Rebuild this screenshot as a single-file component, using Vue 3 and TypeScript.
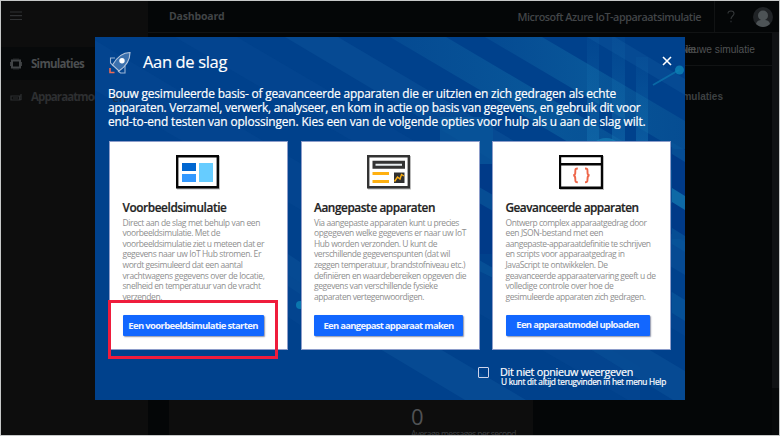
<script setup lang="ts">
import type { Directive } from 'vue'

interface Line { text: string; width: number }
interface Card { kind: 'sample' | 'custom' | 'advanced'; title: Line; lines: Line[]; action: Line }

// Tracks the text out or in so that it fills the given width.
const vFit: Directive<HTMLElement, number> = {
  mounted(el, { value }) {
    const count = el.textContent?.length ?? 1
    const natural = el.getBoundingClientRect().width
    el.style.letterSpacing = `${(value - natural) / count}px`
  },
}

const intro: Line[] = [
  { text: 'Bouw gesimuleerde basis- of geavanceerde apparaten die er uitzien en zich gedragen als echte', width: 508 },
  { text: 'apparaten. Verzamel, verwerk, analyseer, en kom in actie op basis van gegevens, en gebruik dit voor', width: 532.5 },
  { text: 'end-to-end testen van oplossingen. Kies een van de volgende opties voor hulp als u aan de slag wilt.', width: 537.5 },
]

const cards: Card[] = [
  {
    kind: 'sample',
    title: { text: 'Voorbeeldsimulatie', width: 104 },
    lines: [
      { text: 'Direct aan de slag met behulp van een', width: 137.5 },
      { text: 'voorbeeldsimulatie. Met de', width: 97.5 },
      { text: 'voorbeeldsimulatie ziet u meteen dat er', width: 141.5 },
      { text: 'gegevens naar uw IoT Hub stromen. Er', width: 138.5 },
      { text: 'wordt gesimuleerd dat een aantal', width: 120 },
      { text: 'vrachtwagens gegevens over de locatie,', width: 142 },
      { text: 'snelheid en temperatuur van de vracht', width: 138 },
      { text: 'verzenden.', width: 39.5 },
    ],
    action: { text: 'Een voorbeeldsimulatie starten', width: 129.5 },
  },
  {
    kind: 'custom',
    title: { text: 'Aangepaste apparaten', width: 121 },
    lines: [
      { text: 'Via aangepaste apparaten kunt u precies', width: 145 },
      { text: 'opgegeven welke gegevens er naar uw IoT', width: 152 },
      { text: 'Hub worden verzonden. U kunt de', width: 123 },
      { text: 'verschillende gegevenspunten (dat wil', width: 136 },
      { text: 'zeggen temperatuur, brandstofniveau etc.)', width: 151 },
      { text: 'definiëren en waardebereiken opgeven die', width: 152 },
      { text: 'gegevens van verschillende fysieke', width: 123.5 },
      { text: 'apparaten vertegenwoordigen.', width: 110 },
    ],
    action: { text: 'Een aangepast apparaat maken', width: 130 },
  },
  {
    kind: 'advanced',
    title: { text: 'Geavanceerde apparaten', width: 133 },
    lines: [
      { text: 'Ontwerp complex apparaatgedrag door', width: 141 },
      { text: 'een JSON-bestand met een', width: 97.5 },
      { text: 'aangepaste-apparaatdefinitie te schrijven', width: 145 },
      { text: 'en scripts voor apparaatgedrag in', width: 119 },
      { text: 'JavaScript te ontwikkelen. De', width: 102 },
      { text: 'geavanceerde apparaatervaring geeft u de', width: 150 },
      { text: 'volledige controle over hoe de', width: 108 },
      { text: 'gesimuleerde apparaten zich gedragen.', width: 140 },
    ],
    action: { text: 'Een apparaatmodel uploaden', width: 122.5 },
  },
]
</script>

<template>
  <div class="app">
    <nav class="sidebar">
      <svg class="menu" viewBox="0 0 12 10"><path d="M0 1h12M0 4.7h12M0 8.5h12" /></svg>
      <div class="nav-item active">
        <svg class="nav-icon" viewBox="0 0 12 12"><path d="M2 2.500h8v7H2z" /><path class="pins" d="M4 .5v1M6 .5v1M8 .5v1M4 10.500v1M6 10.500v1M8 10.500v1M.4 4v4M11.600 4v4" /></svg>
        <span v-fit="53">Simulaties</span>
      </div>
      <div class="nav-item">
        <svg class="nav-icon" viewBox="0 0 12 12"><path class="thin" d="M1 5h8.500v4H1zM3 7h5M9.500 5h1.500V3M11 5v3.500L9.500 9" /></svg>
        <span v-fit="93">Apparaatmodellen</span>
      </div>
    </nav>
    <div class="main">
      <header class="topbar">
        <span v-fit="55.5" class="crumb">Dashboard</span>
        <span v-fit="183.5" class="product">Microsoft Azure IoT-apparaatsimulatie</span>
        <div class="account">
          <svg class="help" viewBox="0 0 8 13"><path d="M1 3.500C1 .2 7 .2 7 3.500 7 6 4 6 4 9M4 10.800v1.500" /></svg>
          <svg class="avatar" viewBox="0 0 20 20">
            <circle class="ring" cx="10" cy="10" r="10" />
            <circle class="person" cx="10" cy="8.500" r="5" />
            <path class="person" d="M3 17c1-4 4-4 7-4s6 0 7 4c-4 4-10 4-14 0z" />
          </svg>
        </div>
      </header>
      <div class="content">
        <div class="page">
          <div class="toolbar"><span class="new-sim">Nieuwe simulatie</span></div>
          <div class="filter"><span>simulaties</span></div>
          <section class="metric">
            <strong>0</strong>
            <small v-fit="105">Average messages per second</small>
          </section>
        </div>
        <div class="scroll"><div class="thumb"></div></div>
      </div>
    </div>
    <span class="new-sim echo">Nie</span>

    <div class="dialog" role="dialog">
      <svg class="backdrop" viewBox="0 0 590 363">
        <defs>
          <linearGradient id="beam" x1="0" y1="0" x2="0" y2="1">
            <stop offset="0" stop-color="#1471b0" stop-opacity="0.1" />
            <stop offset="1" stop-color="#1471b0" stop-opacity="0.5" />
          </linearGradient>
          <linearGradient id="teal" x1="0" y1="0" x2="1" y2="0">
            <stop offset="0" stop-color="#0a5599" stop-opacity="0.45" />
            <stop offset="0.5" stop-color="#085699" />
            <stop offset="1" stop-color="#075094" stop-opacity="0.8" />
          </linearGradient>
        </defs>
        <path class="faint" d="M80 0h62l448 263v36z" />
        <path class="faint" d="M-2 2L545 330v33h-12L-2 52z" />
        <path class="soft" d="M190 0h53l347 205v33z" />
        <path fill="url(#teal)" d="M295 0h56l239 141v33z" />
        <path fill="url(#teal)" d="M390 0h57l143 84v34z" />
        <path class="soft" d="M492 0h28l70 42v16z" />
        <path class="teal" d="M345 80h45l8 6v41h-53z" />
        <path class="deep" d="M371 127h27v90h-27zM577 112h13v90h-13z" />
        <path class="teal" d="M384 150l14 8v16l-14-8zM384 223l14 8v10l-14-7z" />
        <path class="bright" d="M577 151l13 8v14l-13-8z" />
        <path class="teal" d="M577 105l13 8v12l-13-8zM577 191l13 8v16l-13-8zM577 255l13 8v21l-13-8z" />
        <path class="soft" d="M193 217l12 8v32l-12-8zM285 312h60l86 51h-61zM495 312h58l37 22v29h-12z" />
        <path class="faint" d="M193 238l12 8v42l-12-8z" />
        <circle class="node" cx="205" cy="268" r="4" />
        <rect fill="url(#beam)" x="492" y="0" width="12" height="104" />
        <rect fill="url(#beam)" x="517" y="0" width="13" height="104" />
        <rect fill="url(#beam)" x="541" y="20" width="12" height="84" />
        <circle class="bright" cx="511" cy="118" r="17" />
        <path class="link" d="M584 33L558 48" />
        <circle class="node" cx="584.500" cy="33" r="4.500" />
      </svg>

      <span class="ghost">en</span>

      <div class="dialog-head">
        <svg class="rocket" viewBox="0 0 24 24">
          <path class="fin" d="M7 7H2.500v5l3 3M10 20l2.500 2H17v-7" />
          <path class="hull" d="M22 1.500C15 1.500 9 6 4.500 14l6.500 6C17 16 22 10 22 1.500z" />
          <circle class="port" cx="14" cy="9.800" r="2.700" />
          <path class="flame" d="M2 17v4.500h4.500" />
        </svg>
        <h1><span v-fit="84">Aan de slag</span></h1>
        <svg class="close" viewBox="0 0 10 10"><path d="M1 1l8 8M9 1L1 9" /></svg>
      </div>

      <div class="intro">
        <div v-for="line in intro" :key="line.text"><span v-fit="line.width">{{ line.text }}</span></div>
      </div>

      <div class="cards">
        <article v-for="card in cards" :key="card.kind" class="card" :class="card.kind">
          <svg v-if="card.kind === 'sample'" class="picture" viewBox="0 0 44 34">
            <path class="frame" d="M1.200 1.200h40.600v31.100H1.200z" />
            <path fill="#0066d0" d="M6 8h14v8H6z" /><path fill="#3399ff" d="M6 19h14v8H6z" /><path fill="#66ccff" d="M23 8h14v19H23z" />
          </svg>
          <svg v-else-if="card.kind === 'custom'" class="picture" viewBox="0 0 44 34">
            <path class="frame gray" d="M1.200 1.200h40.600v31.100H1.200z" />
            <path class="field" d="M7 7.200h29.500v5H7z" />
            <path fill="#ffb010" d="M5.500 17h16.500v3H5.500zM5.500 25h16.500v3H5.500z" />
            <path fill="#303030" d="M27 17.500h10.500V28H27z" />
            <path class="spark" d="M27.500 26.500l3-4.500 2.500 2 1.500-4.500 2.500 1.500" />
          </svg>
          <svg v-else class="picture" viewBox="0 0 44 34">
            <path class="frame" d="M1 1h42v31.700H1zM1 9.200h42" />
            <path class="brace" d="M18.800 13.500c-2.500 0-2.500.7-2.500 3 0 2.500 0 3.500-2 3.700 2 .2 2 1.500 2 3.800s0 3.200 2.500 3.200M26 13.500c2.500 0 2.500.7 2.500 3 0 2.500 0 3.500 2 3.700-2 .2-2 1.500-2 3.800s0 3.200-2.500 3.200" />
          </svg>
          <h2><span v-fit="card.title.width">{{ card.title.text }}</span></h2>
          <div class="description">
            <div v-for="line in card.lines" :key="line.text"><span v-fit="line.width">{{ line.text }}</span></div>
          </div>
          <button type="button"><span v-fit="card.action.width">{{ card.action.text }}</span></button>
        </article>
      </div>

      <label class="dismiss">
        <span class="box"></span>
        <span class="dismiss-text">
          <b><span v-fit="133">Dit niet opnieuw weergeven</span></b>
          <small><span v-fit="165">U kunt dit altijd terugvinden in het menu Help</span></small>
        </span>
      </label>
      <div class="highlight"></div>
    </div>
  </div>
</template>

<style>
body { margin: 0; overflow: hidden; }
</style>

<style scoped>
* { box-sizing: border-box; }
svg { display: block; fill: none; flex: none; }
span { white-space: nowrap; display: inline-block; }
.app {
  position: relative; display: flex; width: 780px; height: 436px; overflow: hidden;
  border: 1px solid #c6c8c8; background: #040607;
  font-family: "Open Sans", "Noto Sans", sans-serif; color: #3d4042;
}
.sidebar { width: 147px; flex: none; background: #0d0d0d; overflow: hidden; font-size: 11.500px; }
.menu { width: 12px; height: 10px; margin: 10px 0 26px 9px; stroke: #303234; stroke-width: 1.200; }
.nav-item { height: 33px; display: flex; align-items: center; gap: 9px; padding-left: 9px; color: #2d2f31; font-weight: 700; }
.nav-item.active { background: #07090a; color: #4b4e50; }
.nav-icon { width: 12px; height: 12px; stroke: #414446; stroke-width: 2; }
.nav-icon .pins { stroke-width: 1; }
.nav-icon .thin { stroke: #2d2f31; stroke-width: 1.200; }
.main { flex: 1; min-width: 0; display: flex; flex-direction: column; }
.topbar { height: 32px; flex: none; display: flex; align-items: center; border-bottom: 1px solid #111314; font-size: 10.800px; font-weight: 600; }
.crumb { margin-left: 21px; font-size: 10.500px; font-weight: 700; color: #414446; padding-bottom: 2px; }
.product { margin-left: auto; margin-right: 13px; color: #424547; }
.account { width: 65px; height: 31px; border-left: 1px solid #111314; display: flex; align-items: center; }
.help { width: 8px; height: 13px; margin-left: 12px; stroke: #343739; stroke-width: 1.100; }
.avatar { width: 20px; height: 20px; margin-left: 18px; }
.ring { fill: #202326; }
.person { fill: #4d5356; }
.content { flex: 1; min-height: 0; display: flex; }
.page { flex: 1; display: flex; flex-direction: column; }
.toolbar { height: 33px; border-bottom: 1px solid #111314; display: flex; align-items: center; justify-content: flex-end; padding-right: 17px; }
.new-sim { font-family: "Liberation Sans", Arial, sans-serif; font-size: 10.200px; color: #505254; }
.echo { position: absolute; left: 680px; top: 43px; line-height: 12px; }
.filter { display: flex; justify-content: flex-end; padding: 25px 49px 0 0; font: bold 10px/12px "Liberation Sans", Arial, sans-serif; color: #3d4042; }
.metric {
  margin: auto 239px 0 21px; height: 36px; padding-left: 242px; overflow: hidden; background: #0d0d0d;
  display: flex; flex-direction: column; align-items: flex-start;
}
.metric strong { font-size: 22px; line-height: 35px; height: 29px; font-weight: 400; color: #505254; }
.metric small { font-size: 8.500px; line-height: 12px; flex: none; white-space: nowrap; }
.scroll { width: 7px; background: #07090a; }
.thumb { height: 355px; background: #101214; }

.dialog {
  position: absolute; left: 94px; top: 36px; width: 590px; height: 363px; padding: 14px 13px;
  background: #00418c; color: #fff; overflow: hidden;
}
.backdrop { position: absolute; left: 0; top: 0; width: 590px; height: 363px; }
.faint { fill: #074993; opacity: .45; }
.soft { fill: #084f96; opacity: .7; }
.teal { fill: #09569a; opacity: .7; }
.deep { fill: #003a88; }
.bright { fill: #147db4; opacity: .7; }
.node { fill: #0c80b4; opacity: .85; }
.link { stroke: #0c75ad; stroke-width: 2; opacity: .75; }
.ghost { position: absolute; left: 17px; top: 53px; font-size: 11.500px; font-weight: 600; color: #292b2d; opacity: .75; }
.dialog-head { position: relative; display: flex; height: 24px; }
.rocket { width: 24px; height: 24px; }
.fin { stroke: #9ab4d5; stroke-width: 1.100; }
.hull { fill: #3b70ad; stroke: #b4c5dc; stroke-width: 1.100; }
.port { fill: #fff; }
.flame { stroke: #ed6b55; stroke-width: 1.600; }
h1 { margin: 0 0 0 11px; font-size: 16.500px; line-height: 22px; font-weight: 500; -webkit-text-stroke: 0.150px #fff; }
.close { width: 10px; height: 10px; margin: 5px 0 0 auto; stroke: #fff; stroke-width: 1.600; }
.intro { position: relative; margin-top: 11px; font-size: 11.900px; line-height: 14px; font-weight: 500; -webkit-text-stroke: 0.200px #fff; }
.intro div { height: 14px; }
.cards { position: relative; display: grid; grid-template-columns: repeat(3, 179px); gap: 12.500px; margin: 12.500px 0 0 1px; }
.card { height: 209px; padding: 13px 12.500px 0; background: #fff; border: 0.500px solid #8d9dca; }
.picture { width: 44px; height: 34px; margin-left: 53px; filter: drop-shadow(1px 1px 0.500px #bbb); }
.frame { stroke: #050505; stroke-width: 2.400; fill: #fff; }
.frame.gray { stroke: #333; }
.field { stroke: #333; stroke-width: 3; fill: #e9eef0; }
.spark { stroke: #ffb010; stroke-width: 1.400; }
.brace { stroke: #ee6548; stroke-width: 1.900; }
h2 { margin: 10px 0 0; font-size: 11.800px; line-height: 17px; height: 18px; font-weight: 600; color: #222; -webkit-text-stroke: 0.200px #222; }
.description { margin-top: 1px; font-size: 8.500px; line-height: 10.650px; color: #8f8f8f; height: 86px; }
.description div { height: 10.650px; }
button {
  display: block; width: 141px; height: 21px; margin: 11px 0 0 0; padding: 0; border: 0; border-radius: 1px;
  background: #1267ff; box-shadow: 1px 1px 1.500px #8c92a8; color: #f0f4ff;
  font-family: inherit; font-size: 9.500px; line-height: 21px; font-weight: 700; text-align: center;
}
.custom button { width: 149px; }
.advanced button { width: 144px; }
.advanced button span { position: relative; top: -0.500px; }
.dismiss { position: relative; display: flex; justify-content: flex-end; gap: 11px; margin: 15.500px 6px 0 0; }
.box { width: 11px; height: 11px; margin-top: 2px; border: 1px solid #cdd3ea; border-radius: 1px; }
.dismiss-text { display: flex; flex-direction: column; }
.dismiss b { font-size: 10.800px; line-height: 13px; height: 12px; font-weight: 500; -webkit-text-stroke: 0.200px #fff; }
.dismiss small { font-size: 8.300px; line-height: 10px; font-weight: 500; padding-left: 1px; -webkit-text-stroke: 0.200px #fff; }
.highlight { position: absolute; left: 13px; top: 263px; width: 170px; height: 59px; border: 3px solid #ef1c3c; }
</style>
